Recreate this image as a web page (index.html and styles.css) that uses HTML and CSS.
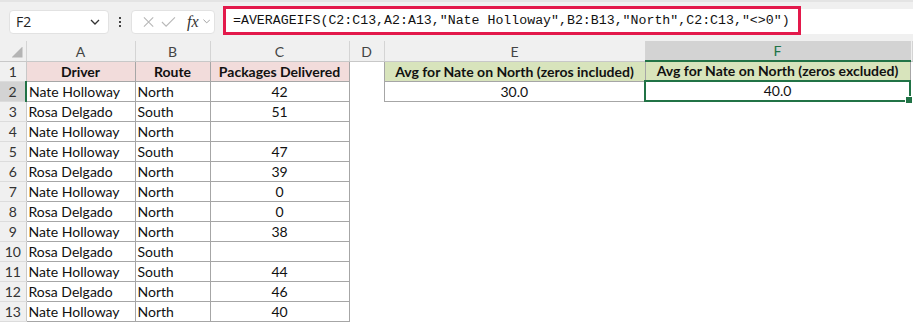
FILE: index.html
```html
<!DOCTYPE html>
<html lang="en">
<head>
    <meta charset="UTF-8">
    <title>AVERAGEIFS</title>
    <link rel="stylesheet" href="styles.css">
</head>
<body>

    <div class="toolbar">
        <div class="name-box">
            <span>F2</span>
            <svg width="10" height="6" viewBox="0 0 10 6"><path d="M1 1 L5 5 L9 1" fill="none" stroke="#333" stroke-width="1.3"/></svg>
        </div>
        <div class="dots"><i></i><i></i><i></i></div>
        <div class="fx-box">
            <svg width="12" height="12" viewBox="0 0 12 12"><path d="M1 1 L11 11 M11 1 L1 11" stroke="#b8b8b8" stroke-width="1.2"/></svg>
            <svg width="16" height="12" viewBox="0 0 16 12"><path d="M1 6 L5.5 10.5 L15 1" fill="none" stroke="#b8b8b8" stroke-width="1.2"/></svg>
            <span class="fx">fx</span>
            <svg width="8" height="5" viewBox="0 0 8 5"><path d="M0.5 0.5 L4 4 L7.5 0.5" fill="none" stroke="#999" stroke-width="1"/></svg>
        </div>
        <div class="formula-bar">
            <div class="formula">=AVERAGEIFS(C2:C13,A2:A13,"Nate Holloway",B2:B13,"North",C2:C13,"&lt;&gt;0")</div>
        </div>
    </div>

    <table class="sheet">
        <colgroup>
            <col style="width:26px">
            <col style="width:109px">
            <col style="width:75px">
            <col style="width:139px">
            <col style="width:35px">
            <col style="width:261px">
            <col style="width:265px">
            <col>
        </colgroup>
        <tr class="col-heads">
            <th class="corner"><span class="tri"></span></th>
            <th>A</th><th>B</th><th>C</th><th>D</th><th>E</th><th class="sel">F</th><th></th>
        </tr>
        <tr>
            <th class="rh">1</th>
            <td class="t head-pink">Driver</td>
            <td class="t head-pink">Route</td>
            <td class="t head-pink">Packages Delivered</td>
            <td></td>
            <td class="t head-green">Avg for Nate on North (zeros included)</td>
            <td class="t head-green f1">Avg for Nate on North (zeros excluded)</td>
            <td></td>
        </tr>
        <tr>
            <th class="rh rh-sel">2</th>
            <td class="t">Nate Holloway</td><td class="t">North</td><td class="t num">42</td>
            <td></td>
            <td class="t num">30.0</td>
            <td class="t num active">40.0<span class="handle"></span></td>
            <td></td>
        </tr>
        <tr><th class="rh">3</th><td class="t">Rosa Delgado</td><td class="t">South</td><td class="t num">51</td><td colspan="4"></td></tr>
        <tr><th class="rh">4</th><td class="t">Nate Holloway</td><td class="t">North</td><td class="t num"></td><td colspan="4"></td></tr>
        <tr><th class="rh">5</th><td class="t">Nate Holloway</td><td class="t">South</td><td class="t num">47</td><td colspan="4"></td></tr>
        <tr><th class="rh">6</th><td class="t">Rosa Delgado</td><td class="t">North</td><td class="t num">39</td><td colspan="4"></td></tr>
        <tr><th class="rh">7</th><td class="t">Nate Holloway</td><td class="t">North</td><td class="t num">0</td><td colspan="4"></td></tr>
        <tr><th class="rh">8</th><td class="t">Rosa Delgado</td><td class="t">North</td><td class="t num">0</td><td colspan="4"></td></tr>
        <tr><th class="rh">9</th><td class="t">Nate Holloway</td><td class="t">North</td><td class="t num">38</td><td colspan="4"></td></tr>
        <tr><th class="rh">10</th><td class="t">Rosa Delgado</td><td class="t">South</td><td class="t num"></td><td colspan="4"></td></tr>
        <tr><th class="rh">11</th><td class="t">Nate Holloway</td><td class="t">South</td><td class="t num">44</td><td colspan="4"></td></tr>
        <tr><th class="rh">12</th><td class="t">Rosa Delgado</td><td class="t">North</td><td class="t num">46</td><td colspan="4"></td></tr>
        <tr><th class="rh">13</th><td class="t">Nate Holloway</td><td class="t">North</td><td class="t num">40</td><td colspan="4"></td></tr>
    </table>

</body>
</html>
```

FILE: styles.css
```css
body {
    margin: 0;
    padding: 0;
    background: #ffffff;
    font-family: Lato, "Open Sans", sans-serif;
    color: #111;
    overflow: hidden;
}
.toolbar {
    height: 41px;
    background: #f0f0f0;
    border-top: 2px solid #e4e4e4;
    box-sizing: border-box;
    display: flex;
    align-items: center;
}
.name-box {
    margin-left: 9px;
    width: 100px;
    height: 24px;
    box-sizing: border-box;
    background: white;
    border: 1px solid #e2e2e2;
    border-radius: 4px;
    display: flex;
    align-items: center;
    justify-content: space-between;
    padding: 0 8px 0 6px;
    font-size: 14px;
    color: #222;
    font-family: "Open Sans", sans-serif;
}
.dots {
    width: 22px;
    display: flex;
    flex-direction: column;
    align-items: center;
    gap: 2px;
}
.dots i {
    display: block;
    width: 2px;
    height: 2px;
    background: #444;
}
.fx-box {
    width: 84px;
    height: 24px;
    box-sizing: border-box;
    background: white;
    border: 1px solid #e2e2e2;
    border-radius: 4px;
    display: flex;
    align-items: center;
    padding: 0 4px 0 11px;
    gap: 4px;
}
.fx-box svg:nth-child(2) {
    margin-left: 3px;
}
.fx {
    font-family: "Liberation Serif", serif;
    font-style: italic;
    font-size: 16px;
    color: #333;
    margin-left: 7px;
}
.formula-bar {
    flex: 1;
    margin-left: 8px;
    height: 25px;
    background: white;
    display: flex;
    align-items: center;
}
.formula {
    height: 29px;
    box-sizing: border-box;
    border: 3px solid #e3194b;
    display: flex;
    align-items: center;
    padding: 0 8px 0 7px;
    font-family: "Liberation Mono", monospace;
    font-size: 13.25px;
    color: #111;
    margin-top: -2px;
    white-space: nowrap;
}
.sheet {
    border-collapse: collapse;
    table-layout: fixed;
    width: 913px;
    font-size: 14px;
}
.sheet tr {
    height: 20px;
}
.sheet th, .sheet td {
    padding: 0 2px;
    white-space: nowrap;
    overflow: hidden;
    line-height: 18px;
    vertical-align: bottom;
}
.col-heads th {
    background: #f0f0f0;
    font-weight: normal;
    color: #444;
    font-size: 14px;
    border-right: 1px solid #d4d4d4;
    border-bottom: 1px solid #c8c8c8;
}
.col-heads th.sel {
    background: #d3d3d3;
    color: #217346;
    border-bottom: 2px solid #217346;
}
.corner {
    position: relative;
}
.tri {
    position: absolute;
    right: 3px;
    bottom: 3px;
    width: 11px;
    height: 11px;
    background: #b4b4b4;
    clip-path: polygon(100% 0, 100% 100%, 0 100%);
}
.rh {
    background: #f0f0f0;
    font-weight: normal;
    color: #333;
    font-size: 14px;
    text-align: center;
    border-right: 1px solid #c8c8c8;
    border-bottom: 1px solid #dcdcdc;
    padding: 0 !important;
}
.rh-sel {
    background: #d3d3d3;
    border-right: 2px solid #217346;
}
.t {
    border: 1px solid #a6a6a6;
}
.head-pink {
    background: #f2dcdb;
    font-weight: bold;
    text-align: center;
}
.head-green {
    background: #d8e4bc;
    font-weight: bold;
    text-align: center;
}
.f1 {
    border-left: 1px solid #217346;
}
.num {
    text-align: center;
}
.active {
    border: 2px solid #217346;
    position: relative;
    overflow: visible !important;
}
.handle {
    position: absolute;
    right: -4px;
    bottom: -4px;
    width: 6px;
    height: 6px;
    background: #217346;
    border: 1px solid white;
}
```
